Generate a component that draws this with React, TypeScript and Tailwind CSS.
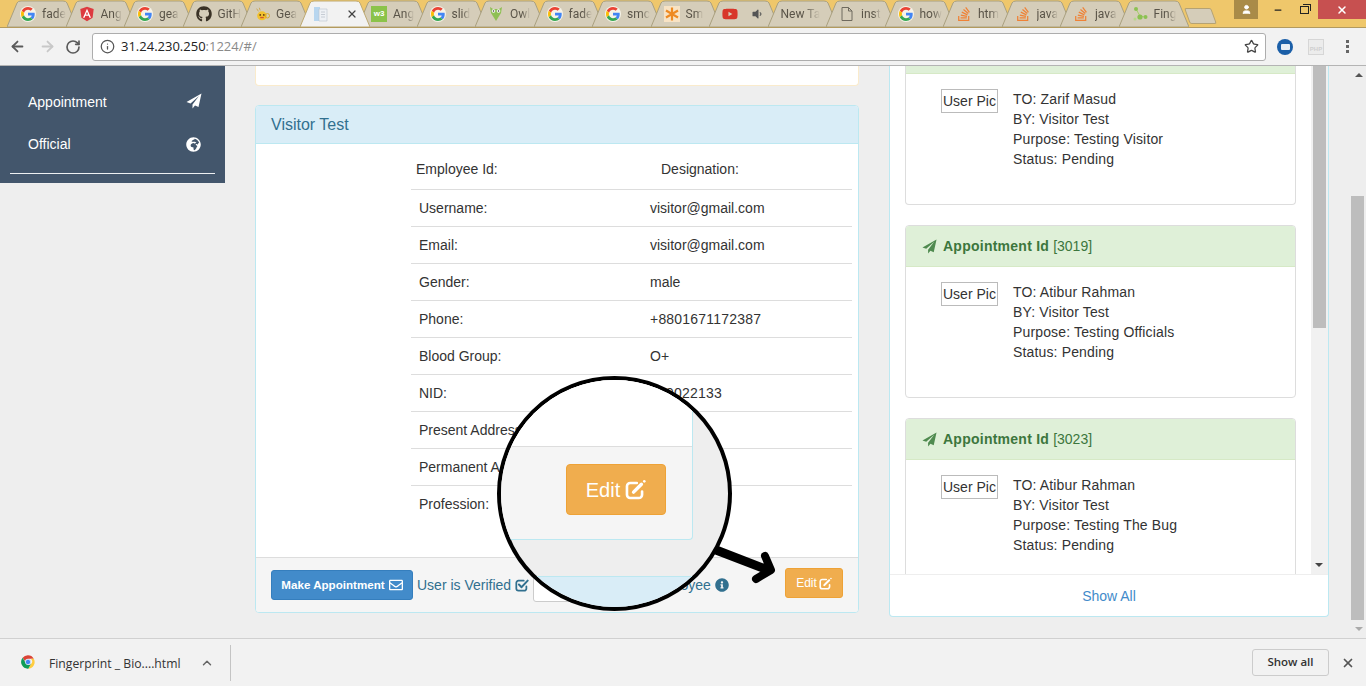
import React from 'react';
import { ArrowLeft, ArrowRight, RotateCw, Info, Star, X, ChevronUp, User, Minus } from 'lucide-react';
import { FaGithub, FaStackOverflow, FaYoutube, FaGlobeAfrica, FaRegEnvelope, FaInfoCircle, FaVolumeDown } from 'react-icons/fa';

const GoogleIcon = () => (
  <svg viewBox="0 0 48 48" className="h-[14px] w-[14px]">
    <path fill="#EA4335" d="M24 9.5c3.5 0 6.700 1.200 9.200 3.600l6.900-6.900C35.900 2.400 30.500 0 24 0 14.600 0 6.500 5.400 2.600 13.200l8 6.200C12.500 13.600 17.800 9.500 24 9.500z" />
    <path fill="#4285F4" d="M47 24.500c0-1.600-.1-3.100-.4-4.500H24v9h12.900c-.6 3-2.200 5.500-4.700 7.200l7.700 6C44.400 38 47 31.800 47 24.500z" />
    <path fill="#FBBC05" d="M10.600 28.600c-.5-1.400-.8-3-.8-4.600s.3-3.200.8-4.600l-8-6.200C.9 16.500 0 20.100 0 24s.9 7.500 2.600 10.800l8-6.200z" />
    <path fill="#34A853" d="M24 48c6.500 0 11.900-2.100 15.900-5.800l-7.700-6c-2.200 1.400-4.900 2.300-8.200 2.300-6.200 0-11.500-4.100-13.400-9.900l-8 6.200C6.500 42.600 14.600 48 24 48z" />
  </svg>
);

const GIcon = () => (
  <span className="flex h-[16px] w-[16px] items-center justify-center rounded-full bg-[#f7f3e8]">
    <GoogleIcon />
  </span>
);

const AngularIcon = () => (
  <svg viewBox="0 0 24 24" className="h-[16px] w-[16px]">
    <path fill="#dd3a3f" d="M12 1 2 4.600l1.600 13.200L12 23l8.400-5.200L22 4.600z" />
    <path fill="#fff" d="M12 4 6 17.500h2.300l1.200-3h5l1.200 3H18zm-1.700 8.700L12 8.500l1.700 4.200z" />
  </svg>
);

const GearIcon = () => (
  <svg viewBox="0 0 18 18" className="h-[16px] w-[16px]">
    <ellipse cx="9" cy="11" rx="5.500" ry="5" fill="#f2c230" />
    <circle cx="15" cy="11" r="2.500" fill="none" stroke="#d9a520" strokeWidth="1" />
    <path d="M3 3l2 3M6 2l1 3" stroke="#c9a24a" strokeWidth="1" />
    <circle cx="7" cy="10" r="1" fill="#5b3a10" />
    <circle cx="11" cy="10" r="1" fill="#5b3a10" />
    <path d="M7 13h4" stroke="#d2562a" strokeWidth="1.500" />
  </svg>
);

const DocBlueIcon = () => (
  <svg viewBox="0 0 16 16" className="h-[16px] w-[16px]">
    <path d="M1 1h6v14H1z" fill="#b8d6ef" />
    <path d="M6 3h8v12H6z" fill="#eef1f5" stroke="#b9c2cc" strokeWidth="0.600" />
    <path d="M8 6h4M8 8.500h4M8 11h4" stroke="#c6ccd4" />
  </svg>
);

const W3Icon = () => (
  <span className="flex h-[16px] w-[16px] items-center justify-center bg-[#8bc34a] font-['Liberation_Sans',sans-serif] text-[8px] font-bold leading-none text-white">
    w3
  </span>
);

const OwlIcon = () => (
  <svg viewBox="0 0 16 16" className="h-[16px] w-[16px]">
    <path d="M2 1l3 2h6l3-2-1 6-5 8-5-8z" fill="#8fbf55" />
    <circle cx="5.500" cy="5" r="1.800" fill="#fff" />
    <circle cx="10.500" cy="5" r="1.800" fill="#fff" />
    <circle cx="5.500" cy="5" r="0.800" fill="#333" />
    <circle cx="10.500" cy="5" r="0.800" fill="#333" />
  </svg>
);

const AsteriskIcon = () => (
  <svg viewBox="0 0 16 16" className="h-[16px] w-[16px]">
    <rect width="16" height="16" fill="#f8e3c4" />
    <path d="M8 1.500v13M2 4.500l12 7M14 4.500l-12 7" stroke="#ee8a22" strokeWidth="2.200" />
  </svg>
);

const YoutubeIcon = () => <FaYoutube className="h-[16px] w-[16px] text-[#d8362a]" />;

const PageIcon = () => (
  <svg viewBox="0 0 16 16" className="h-[16px] w-[16px]" fill="none" stroke="#6f6a5e" strokeWidth="1">
    <path d="M3 1.500h6.500L13 5v9.500H3z" />
    <path d="M9.500 1.500V5H13" />
  </svg>
);

const SoIcon = () => <FaStackOverflow className="h-[16px] w-[16px] text-[#ef8236]" />;

const FingIcon = () => (
  <svg viewBox="0 0 16 16" className="h-[16px] w-[16px]">
    <path d="M4 3l4 7 5 1" stroke="#a7cf6b" strokeWidth="1" fill="none" />
    <circle cx="4" cy="3" r="2" fill="#8cc152" />
    <circle cx="8" cy="11" r="2.600" fill="#8cc152" />
    <circle cx="13.500" cy="11" r="2" fill="#8cc152" />
    <circle cx="3" cy="13" r="1.500" fill="#b6d989" />
  </svg>
);

const ChromeIcon = () => (
  <svg viewBox="0 0 48 48" className="h-[16px] w-[16px]">
    <path fill="#db4437" d="M24 4a20 20 0 0 1 17.300 10H24a10 10 0 0 0-9.500 6.900L7.900 11.500A20 20 0 0 1 24 4z" />
    <path fill="#ffcd40" d="M41.300 14A20 20 0 0 1 24.800 44l8-14a10 10 0 0 0-.3-16z" />
    <path fill="#0f9d58" d="M7.900 11.500l8.700 15.100A10 10 0 0 0 32.800 30l-8 14A20 20 0 0 1 7.900 11.500z" />
    <circle cx="24" cy="24" r="8" fill="#4285f4" stroke="#f1f1f1" strokeWidth="2" />
  </svg>
);

const PlaneIcon = ({ className }: { className: string }) => (
  <svg viewBox="0 0 16 16" className={className} fill="currentColor">
    <path d="M15.500.5.500 9l4 1.500L13 3 6.500 11.500v4L9 12.500l3.500 1.500z" />
  </svg>
);

// font-awesome style pencil-square, thicker than what the icon packs give
const EditIcon = ({ className }: { className: string }) => (
  <svg viewBox="0 0 16 16" className={className} fill="none" stroke="currentColor" strokeWidth="2" strokeLinecap="round">
    <path d="M13 9.500V12a2.500 2.500 0 0 1-2.500 2.500H4A2.500 2.500 0 0 1 1.500 12V5.500A2.500 2.500 0 0 1 4 3h5" />
    <path d="M6.500 10 12.500 4" strokeWidth="2.600" />
    <circle cx="14.700" cy="1.800" r="1" fill="currentColor" stroke="none" />
  </svg>
);

const CheckBoxIcon = ({ className }: { className: string }) => (
  <svg viewBox="0 0 16 16" className={className} fill="none" stroke="currentColor" strokeWidth="2" strokeLinecap="round" strokeLinejoin="round">
    <path d="M13 9.500V12a2.500 2.500 0 0 1-2.500 2.500H4A2.500 2.500 0 0 1 1.500 12V5.500A2.500 2.500 0 0 1 4 3h6" />
    <path d="M4.500 7.500 7.500 10.500 14.500 3" strokeWidth="2.300" />
  </svg>
);

const tabs: { icon: React.ReactNode; title?: string }[] = [
  { icon: <GIcon />, title: 'fade' },
  { icon: <AngularIcon />, title: 'Ang' },
  { icon: <GIcon />, title: 'gea' },
  { icon: <FaGithub className="h-[16px] w-[16px] text-[#3a3226]" />, title: 'GitH' },
  { icon: <GearIcon />, title: 'Gea' },
  { icon: <DocBlueIcon /> },
  { icon: <W3Icon />, title: 'Ang' },
  { icon: <GIcon />, title: 'slid' },
  { icon: <OwlIcon />, title: 'Owl' },
  { icon: <GIcon />, title: 'fade' },
  { icon: <GIcon />, title: 'smc' },
  { icon: <AsteriskIcon />, title: 'Sm' },
  { icon: <YoutubeIcon /> },
  { title: 'New Ta', icon: null },
  { icon: <PageIcon />, title: 'inst' },
  { icon: <GIcon />, title: 'how' },
  { icon: <SoIcon />, title: 'htm' },
  { icon: <SoIcon />, title: 'java' },
  { icon: <SoIcon />, title: 'java' },
  { icon: <FingIcon />, title: 'Fing' },
];

const TabShape = ({ active }: { active: boolean }) => (
  <svg viewBox="0 0 70 27" className="absolute inset-0 h-[27px] w-[70px]">
    <path
      d="M0 27 L10 3 Q11 1 14 1 L56 1 Q59 1 60 3 L70 27 Z"
      fill={active ? '#f2f2f2' : '#d5cdb9'}
      stroke={active ? '#bda871' : '#a9a07f'}
      strokeWidth="1"
    />
  </svg>
);

const Tab = ({ icon, title, index }: { icon: React.ReactNode; title?: string; index: number }) => {
  const active = index === 5;
  const muted = index === 12;
  return (
    <div className={`relative -mr-[11.500px] h-[27px] w-[70px] shrink-0 ${active ? 'z-10' : ''}`}>
      <TabShape active={active} />
      <div className="relative flex h-[27px] items-center pl-[13px] pt-[1px]">
        {icon}
        {title && (
          <span className={`whitespace-nowrap font-['Roboto',sans-serif] text-[12px] text-[#5a5448] [mask-image:linear-gradient(to_right,black_60%,transparent)] ${icon ? 'ml-[6px]' : ''}`}>
            {title}
          </span>
        )}
        {active && <X className="ml-[17px] h-[12px] w-[12px] text-[#444]" strokeWidth={2.500} />}
        {muted && <FaVolumeDown className="ml-[13px] h-[12px] w-[12px] text-[#555]" />}
      </div>
    </div>
  );
};

const TopBars = () => (
  <div className="shrink-0">
    <div className="relative flex h-[28px] items-start border-b border-[#b39a5e] bg-[#efc76b] pl-[7px] pt-0">
      {tabs.map((t, i) => (
        <Tab key={i} index={i} icon={t.icon} title={t.title} />
      ))}
      <div className="ml-[10px] mt-[8px] h-[16px] w-[27px] skew-x-[20deg] rounded-[2px] border border-[#b5a273] bg-[#d5cdb9]" />
      <div className="absolute right-0 top-0 flex h-[19px] items-start">
        <div className="flex h-[19px] w-[24px] items-center justify-center bg-[#a98b48]">
          <User className="h-[11px] w-[11px] fill-white text-white" />
        </div>
        <div className="ml-[7px] flex h-[19px] w-[26px] items-center justify-center">
          <Minus className="h-[10px] w-[10px] text-[#222]" strokeWidth={3} />
        </div>
        <div className="flex h-[19px] w-[27px] items-center justify-center">
          <div className="relative h-[8px] w-[9px] border border-[#222] after:absolute after:-right-[3px] after:-top-[3px] after:h-[7px] after:w-[8px] after:border-r after:border-t after:border-[#222]" />
        </div>
        <div className="flex h-[19px] w-[48px] items-center justify-center bg-[#c75050]">
          <X className="h-[12px] w-[12px] text-white" strokeWidth={3} />
        </div>
      </div>
    </div>
    <div className="flex h-[38px] items-center border-b border-[#b4b4b4] bg-[#f2f2f2]">
      <ArrowLeft className="ml-[9px] h-[17px] w-[17px] text-[#5a5a5a]" strokeWidth={2.500} />
      <ArrowRight className="ml-[13px] h-[17px] w-[17px] text-[#c8c8c8]" strokeWidth={2.500} />
      <RotateCw className="ml-[9px] h-[16px] w-[16px] text-[#5a5a5a]" strokeWidth={2.500} />
      <div className="ml-[11px] flex h-[28px] w-[1174px] items-center rounded-[3px] border border-[#adadad] bg-white pl-[7px]">
        <Info className="h-[15px] w-[15px] text-[#555]" strokeWidth={2} />
        <span className="ml-[6px] font-['Open_Sans',sans-serif] text-[13px] text-[#222]">
          31.24.230.250<span className="text-[#8a8a8a]">:1224/#/</span>
        </span>
        <Star className="ml-auto mr-[6px] h-[15px] w-[15px] text-[#444]" strokeWidth={2} />
      </div>
      <div className="ml-[11px] flex h-[16px] w-[16px] items-center justify-center rounded-full bg-[#1b5fa8]">
        <div className="h-[6px] w-[9px] rounded-[1px] bg-[#e8eef5]" />
      </div>
      <div className="ml-[15px] flex h-[16px] w-[16px] items-end justify-center border border-[#d6d6d6] bg-[#ececec] font-['Liberation_Sans',sans-serif] text-[6px] font-bold leading-[10px] text-[#cfcfcf]">
        PHP
      </div>
      <div className="ml-[22px] flex flex-col gap-[2px]">
        <span className="h-[3px] w-[3px] bg-[#666]" />
        <span className="h-[3px] w-[3px] bg-[#666]" />
        <span className="h-[3px] w-[3px] bg-[#666]" />
      </div>
    </div>
  </div>
);

const Sidebar = () => (
  <div className="h-[117px] w-[225px] shrink-0 bg-[#43566c] text-white">
    <div className="flex h-[46px] items-end justify-between pl-[28px] pr-[23px]">
      <span className="text-[14px] leading-[20px]">Appointment</span>
      <PlaneIcon className="mb-[3px] h-[16px] w-[16px]" />
    </div>
    <div className="mt-[22px] flex h-[20px] items-center justify-between pl-[28px] pr-[24px]">
      <span className="text-[14px] leading-[20px]">Official</span>
      <FaGlobeAfrica className="h-[15px] w-[15px]" />
    </div>
    <div className="mx-[10px] mt-[19px] border-t border-[#eef0f2]" />
  </div>
);

const rows = [
  ['Username:', 'visitor@gmail.com'],
  ['Email:', 'visitor@gmail.com'],
  ['Gender:', 'male'],
  ['Phone:', '+8801671172387'],
  ['Blood Group:', 'O+'],
  ['NID:', '199022133'],
  ['Present Address:', ''],
  ['Permanent Address:', ''],
  ['Profession:', ''],
];

const VisitorPanel = () => (
  <div className="relative mt-[19px] flex h-[508px] w-[604px] flex-col rounded-[4px] border border-[#bce8f1] bg-white">
    <div className="flex h-[38px] shrink-0 items-center rounded-t-[3px] border-b border-[#bce8f1] bg-[#d9edf7] pl-[15px] text-[16px] text-[#31708f]">
      Visitor Test
    </div>
    <div className="flex-1 pl-[155px] pr-[6px]">
      <div className="flex h-[46px] items-center border-b border-[#ddd] pl-[5px] pt-[6px]">
        <span className="w-[245px]">Employee Id:</span>
        <span>Designation:</span>
      </div>
      {rows.map(([label, value], i) => (
        <div key={label} className={`flex h-[37px] items-center pl-[8px] ${i < rows.length - 1 ? 'border-b border-[#ddd]' : ''}`}>
          <span className="w-[231px]">{label}</span>
          <span className={/^[+\d]/.test(value) ? 'tracking-[0.2px]' : ''}>{value}</span>
        </div>
      ))}
    </div>
    <div className="flex h-[55px] shrink-0 items-center rounded-b-[3px] border-t border-[#ddd] bg-[#f5f5f5] pl-[15px] pr-[15px]">
      <button className="flex h-[30px] w-[142px] items-center justify-center gap-[4px] rounded-[3px] border border-[#357ebd] bg-[#428bca] text-[11.600px] font-bold text-white">
        Make Appointment
        <FaRegEnvelope className="h-[14px] w-[14px]" />
      </button>
      <span className="ml-[4px] flex items-center gap-[4px] text-[#31708f]">
        User is Verified
        <CheckBoxIcon className="h-[14px] w-[14px]" />
      </span>
      <div className="ml-[4px] mt-[7px] h-[26px] w-[60px] rounded-[3px] border border-[#ccc] bg-white" />
      <span className="ml-[8px] flex items-center gap-[4px] whitespace-nowrap text-[#31708f]">
        User is Employee
        <FaInfoCircle className="h-[14px] w-[14px]" />
      </span>
      <button className="mb-[4px] ml-auto flex h-[30px] w-[58px] items-center justify-center gap-[2px] rounded-[3px] border border-[#eea236] bg-[#f0ad4e] text-[12px] text-white">
        Edit
        <EditIcon className="h-[13px] w-[13px]" />
      </button>
    </div>
  </div>
);

const Magnifier = () => (
  <>
    <div className="absolute left-[497px] top-[310px] z-20 h-[235px] w-[235px] overflow-hidden rounded-full border-[4px] border-black bg-[#eeeeee]">
      <div className="flex h-[160px] w-[192px] flex-col rounded-br-[4px] border-b border-r border-[#bce8f1] bg-[#f5f5f5]">
        <div className="h-[67px] shrink-0 border-b border-[#ddd] bg-white" />
        <div className="flex flex-1 items-start justify-end pr-[26px] pt-[17px]">
          <button className="flex h-[51px] w-[100px] items-center justify-center gap-[5px] rounded-[4px] border border-[#eea236] bg-[#f0ad4e] text-[20px] text-white">
            Edit
            <EditIcon className="h-[21px] w-[21px]" />
          </button>
        </div>
      </div>
      <div className="mt-[36px] h-[40px] border-t border-[#bce8f1] bg-[#d9edf7]" />
    </div>
    <svg className="absolute left-[712px] top-[475px] z-10" width="70" height="50" viewBox="0 0 70 50" fill="none" stroke="#000" strokeLinecap="round" strokeLinejoin="round">
      <path d="M4 9 L56 29" strokeWidth="9" />
      <path d="M53 15 L59 29 L44 38" strokeWidth="8" />
    </svg>
  </>
);

const Appointment = ({ id, to, purpose, cut }: { id?: string; to: string; purpose: string; cut?: boolean }) => (
  <div className={`mb-[20px] shrink-0 rounded-[4px] border border-[#ddd] bg-white ${cut ? 'h-[139px] rounded-t-none border-t-0' : 'h-[173px]'}`}>
    {id ? (
      <div className="flex h-[41px] items-center rounded-t-[3px] border-b border-[#d6e9c6] bg-[#dff0d8] pl-[16px] text-[#3c763d]">
        <PlaneIcon className="h-[15px] w-[15px] text-[#4f8a4f]" />
        <span className="ml-[6px] font-bold tracking-[0.25px]">Appointment Id</span>
        <span className="ml-[4px]">[{id}]</span>
      </div>
    ) : (
      <div className="h-[8px] border-b border-[#d6e9c6] bg-[#dff0d8]" />
    )}
    <div className="flex items-start pl-[35px] pt-[15px]">
      <div className="h-[24px] w-[57px] overflow-hidden whitespace-nowrap border border-[#bbb] pl-[1px] text-[14px] leading-[22px]">User Pic</div>
      <div className="ml-[15px] tracking-[0.15px] leading-[20px]">
        <div>TO: {to}</div>
        <div>BY: Visitor Test</div>
        <div>Purpose: {purpose}</div>
        <div>Status: Pending</div>
      </div>
    </div>
  </div>
);

const RightPanel = () => (
  <div className="ml-[30px] flex h-[551px] w-[440px] flex-col rounded-b-[4px] border-b border-r border-l border-[#bce8f1] bg-white">
    <div className="flex h-[509px] shrink-0 overflow-hidden border-b border-[#eee]">
      <div className="flex w-[421px] flex-col overflow-hidden pl-[15px] pr-[15px]">
        <Appointment to="Zarif Masud" purpose="Testing Visitor" cut />
        <Appointment id="3019" to="Atibur Rahman" purpose="Testing Officials" />
        <Appointment id="3023" to="Atibur Rahman" purpose="Testing The Bug" />
      </div>
      <div className="relative w-[17px] bg-[#f1f1f1] pl-[2px]">
        <div className="h-[262px] w-[13px] bg-[#bdbdbd]" />
        <div className="absolute bottom-[7px] left-[4px] h-0 w-0 border-x-[4px] border-t-[4px] border-x-transparent border-t-[#444]" />
      </div>
    </div>
    <div className="flex flex-1 items-center justify-center pt-[2px] text-[#428bca]">Show All</div>
  </div>
);

const PageScrollbar = () => (
  <div className="relative ml-auto h-full w-[16px] bg-[#eeeeee]">
    <div className="absolute left-[5px] top-[7px] h-0 w-0 border-x-[4px] border-b-[4px] border-x-transparent border-b-[#555]" />
    <div className="absolute left-[1px] top-[130px] h-[424px] w-[13px] bg-[#bdbdbd]" />
    <div className="absolute bottom-[7px] left-[5px] h-0 w-0 border-x-[4px] border-t-[4px] border-x-transparent border-t-[#aaa]" />
  </div>
);

const DownloadBar = () => (
  <div className="flex h-[48px] shrink-0 items-center border-t border-[#d0d0d0] bg-[#f2f2f2] font-['Open_Sans',sans-serif]">
    <div className="mb-[2px] ml-[20px]"><ChromeIcon /></div>
    <span className="ml-[13px] pt-[3px] text-[12.200px] text-[#333]">Fingerprint _ Bio....html</span>
    <ChevronUp className="ml-[19px] h-[14px] w-[14px] text-[#666]" strokeWidth={2.500} />
    <div className="ml-[16px] h-[36px] w-px bg-[#c4c4c4]" />
    <button className="mb-[1px] ml-auto flex h-[27px] w-[77px] items-center justify-center rounded-[3px] border border-[#ccc] font-['Open_Sans',sans-serif] text-[11.500px] font-semibold text-[#333]">
      Show all
    </button>
    <X className="ml-[12px] mr-[11px] h-[14px] w-[14px] text-[#555]" strokeWidth={3} />
  </div>
);

export default function App() {
  return (
    <div className="flex h-[686px] w-[1366px] flex-col overflow-hidden bg-[#eeeeee] font-['Liberation_Sans',Arial,sans-serif] text-[14px] text-[#333]">
      <TopBars />
      <div className="relative flex h-[572px] shrink-0 overflow-hidden">
        <Sidebar />
        <div className="ml-[30px] w-[604px] shrink-0">
          <div className="h-[20px] rounded-b-[4px] border-x border-b border-[#faebcc] bg-white" />
          <VisitorPanel />
        </div>
        <RightPanel />
        <PageScrollbar />
        <Magnifier />
      </div>
      <DownloadBar />
    </div>
  );
}
